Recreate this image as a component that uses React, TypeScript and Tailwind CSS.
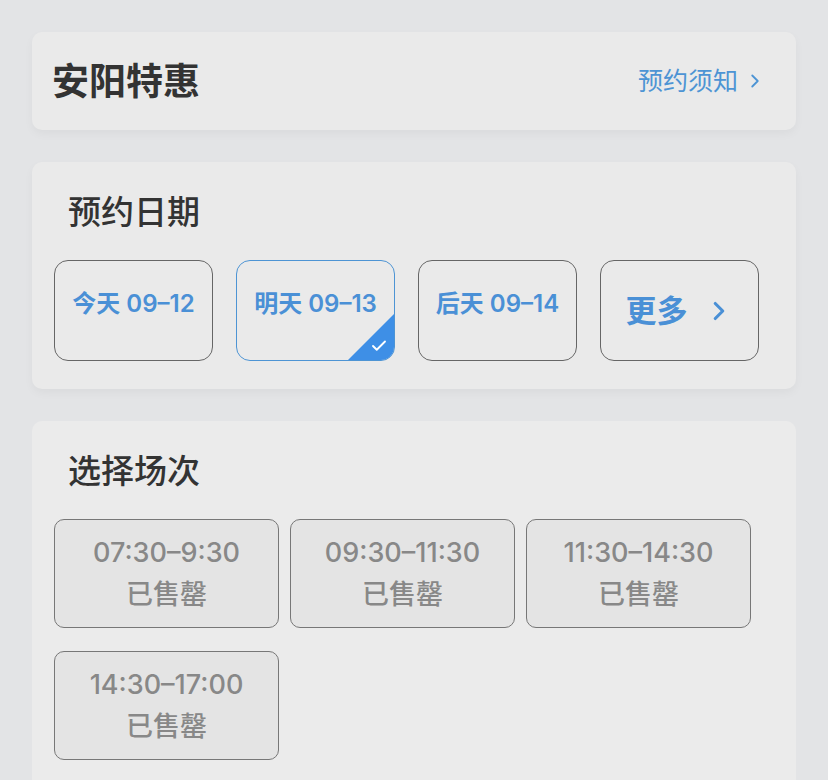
import { Check, ChevronRight } from "lucide-react";

const dates = [
  { label: "今天 09–12", active: false },
  { label: "明天 09–13", active: true },
  { label: "后天 09–14", active: false },
];

const slots = ["07:30–9:30", "09:30–11:30", "11:30–14:30", "14:30–17:00"];

export default function App() {
  return (
    <div
      className="min-h-[780px] bg-[#e3e4e6] px-[32px] pt-[32px] flex flex-col gap-[32px]"
      style={{ fontFamily: 'Inter, "Noto Sans CJK SC", sans-serif' }}
    >
      {/* header */}
      <div className="h-[98px] rounded-[10px] bg-[#eaeaea] shadow-[0_4px_10px_rgba(0,0,0,0.04)] flex items-center justify-between pl-[20px] pr-[30px]">
        <span className="text-[37px] font-bold text-[#333] leading-none">安阳特惠</span>
        <span className="flex items-center gap-[6px] text-[25px] text-[#4d94d4] leading-none">
          预约须知
          <ChevronRight size={22} strokeWidth={2} />
        </span>
      </div>

      {/* date */}
      <div className="rounded-[10px] bg-[#eaeaea] shadow-[0_4px_10px_rgba(0,0,0,0.04)] pt-[30px] pb-[28px] px-[22px]">
        <div className="pl-[14px] text-[33px] font-medium text-[#333] leading-[40px]">预约日期</div>
        <div className="mt-[28px] flex gap-[23px]">
          {dates.map((d) => (
            <div
              key={d.label}
              className={
                d.active
                  ? "relative w-[159px] h-[101px] rounded-[14px] border border-[#4d94d4] overflow-hidden flex justify-center pt-[29px]"
                  : "relative w-[159px] h-[101px] rounded-[14px] border border-[#666] overflow-hidden flex justify-center pt-[29px]"
              }
            >
              <span className="text-[24px] font-semibold text-[#4a90d6] leading-[28px]">{d.label}</span>
              {d.active && (
                <>
                  <div className="absolute right-0 bottom-0 w-0 h-0 border-l-[46px] border-l-transparent border-b-[46px] border-b-[#3e8fe6]" />
                  <Check size={18} strokeWidth={2.5} className="absolute right-[6px] bottom-[5px] text-white" />
                </>
              )}
            </div>
          ))}
          <div className="w-[159px] h-[101px] rounded-[14px] border border-[#666] flex items-center justify-center gap-[16px] text-[#4a90d6]">
            <span className="text-[31px] font-semibold leading-none">更多</span>
            <ChevronRight size={30} strokeWidth={2.5} />
          </div>
        </div>
      </div>

      {/* sessions */}
      <div className="flex-1 rounded-t-[10px] bg-[#ebebeb] pt-[30px] pb-[20px] px-[22px]">
        <div className="pl-[14px] text-[33px] font-medium text-[#333] leading-[40px]">选择场次</div>
        <div className="mt-[28px] grid grid-cols-[225px_225px_225px] gap-x-[11px] gap-y-[23px]">
          {slots.map((s) => (
            <div
              key={s}
              className="h-[109px] rounded-[10px] border border-[#777] bg-[#e4e4e4] flex flex-col items-center justify-center"
            >
              <span className="text-[27px] font-medium text-[#888] leading-[36px]">{s}</span>
              <span className="mt-[6px] text-[27px] font-medium text-[#888] leading-[36px]">已售罄</span>
            </div>
          ))}
        </div>
      </div>
    </div>
  );
}
